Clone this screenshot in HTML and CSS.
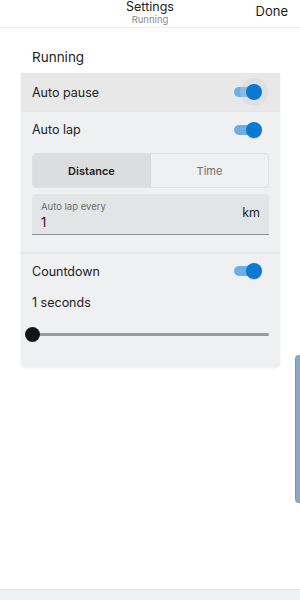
FILE: index.html
```html
<!DOCTYPE html>
<html>
<head>
<meta charset="utf-8">
<link rel="stylesheet" href="styles.css">
</head>
<body>
<div class="page">
  <header class="topbar">
    <div class="titles">
      <div class="title">Settings</div>
      <div class="subtitle">Running</div>
    </div>
    <div class="done">Done</div>
  </header>
  <main class="content">
    <h2 class="section-title">Running</h2>
    <div class="card">
      <div class="row row-active">
        <span class="label">Auto pause</span>
        <span class="toggle focused"><span class="track"></span><span class="knob"></span></span>
      </div>
      <div class="group">
        <div class="row row-plain">
          <span class="label">Auto lap</span>
          <span class="toggle"><span class="track"></span><span class="knob"></span></span>
        </div>
        <div class="segmented">
          <div class="seg seg-on">Distance</div>
          <div class="seg">Time</div>
        </div>
        <div class="field">
          <div class="field-main">
            <div class="field-label">Auto lap every</div>
            <div class="field-value">1</div>
          </div>
          <div class="field-unit">km</div>
        </div>
      </div>
      <div class="group group-last">
        <div class="row row-plain row-count">
          <span class="label">Countdown</span>
          <span class="toggle"><span class="track"></span><span class="knob"></span></span>
        </div>
        <div class="seconds">1 seconds</div>
        <div class="slider"><span class="slider-knob"></span></div>
      </div>
    </div>
  </main>
  <div class="bottom-band"></div>
  <div class="scrollbar"></div>
</div>
</body>
</html>
```
FILE: styles.css
```css
* { box-sizing: border-box; }
html, body { margin: 0; padding: 0; background: #ffffff; }
body {
  font-family: Inter, "Noto Sans", "Liberation Sans", sans-serif;
  color: #1d1d1f;
}
.page {
  position: relative;
  width: 300px;
  height: 600px;
  display: flex;
  flex-direction: column;
  overflow: hidden;
}
.topbar {
  height: 28px;
  border-bottom: 1px solid #ececec;
  display: flex;
  align-items: flex-start;
  justify-content: center;
  position: relative;
  flex-shrink: 0;
}
.titles {
  display: flex;
  flex-direction: column;
  align-items: center;
}
.title { font-size: 12.5px; line-height: 14px; color: #1a1a1a; }
.subtitle { font-size: 9.5px; line-height: 11px; color: #8a8a8a; }
.done {
  position: absolute;
  right: 12px;
  top: 4px;
  font-size: 13px;
  line-height: 14px;
  color: #1a1a1a;
}
.content {
  padding: 21px 20px 0 21px;
}
.section-title {
  margin: 0 0 0 11px;
  font-weight: 400;
  font-size: 13.5px;
  line-height: 17px;
  color: #1d1d1f;
  height: 24px;
}
.card {
  background: #eff0f2;
  border-radius: 0 0 5px 5px;
  box-shadow: 0 1px 3px rgba(0,0,0,0.08);
  display: flex;
  flex-direction: column;
}
.row {
  display: flex;
  align-items: center;
  justify-content: space-between;
  padding: 0 18px 0 11px;
}
.row-active {
  height: 39px;
  background: #e8e8e9;
  border-bottom: 1px solid #e4e5e7;
}
.row-plain { height: 35px; }
.label { font-size: 12.5px; color: #222; }
.toggle {
  position: relative;
  width: 28px;
  height: 18px;
  display: inline-block;
}
.track {
  position: absolute;
  left: 0;
  top: 4px;
  width: 24px;
  height: 10px;
  border-radius: 5px;
  background: #6bb0e0;
}
.knob {
  position: absolute;
  right: 0;
  top: 1px;
  width: 16px;
  height: 16px;
  border-radius: 50%;
  background: #0b78d1;
  box-shadow: 0 1px 1px rgba(0,0,0,0.15);
}
.focused .knob { box-shadow: 0 0 0 6px rgba(200,210,220,0.35); }
.group {
  padding: 0 0 17px 0;
  border-bottom: 2px solid #e6e7e9;
}
.group-last { border-bottom: none; padding-bottom: 0; height: 113px; }
.segmented {
  margin: 6px 11px 0 11px;
  height: 35px;
  display: flex;
  border: 1px solid #dfe0e2;
  border-radius: 4px;
  overflow: hidden;
}
.seg {
  flex: 1;
  display: flex;
  align-items: center;
  justify-content: center;
  font-size: 11px;
  color: #6e6e6e;
  background: #eff0f2;
}
.seg-on {
  background: #dcdddf;
  color: #1d1d1f;
  font-weight: 600;
  border-right: 1px solid #d6d7d9;
}
.field {
  margin: 6px 11px 0 11px;
  height: 41px;
  background: #e3e4e6;
  border-radius: 4px 4px 0 0;
  border-bottom: 1px solid #8f8f8f;
  display: flex;
  align-items: center;
  justify-content: space-between;
  padding: 0 9px 0 9px;
}
.field-main { display: flex; flex-direction: column; padding-top: 3px; }
.field-label { font-size: 9.5px; color: #6c6c6c; line-height: 12px; }
.field-value { font-size: 13px; color: #1d1d1f; line-height: 18px; }
.field-unit { font-size: 12.5px; color: #1d1d1f; padding-bottom: 3px; }
.row-count { height: 34px; }
.seconds {
  padding: 0 11px;
  font-size: 12.5px;
  color: #222;
  height: 30px;
  line-height: 30px;
}
.slider {
  position: relative;
  margin: 15px 11px 0 11px;
  height: 3px;
  background: #9a9a9c;
  border-radius: 2px;
}
.slider-knob {
  position: absolute;
  left: -7px;
  top: -6px;
  width: 15px;
  height: 15px;
  border-radius: 50%;
  background: #121416;
}
.bottom-band {
  margin-top: auto;
  height: 11px;
  background: #eff0f2;
  border-top: 1px solid #e6e6e6;
}
.scrollbar {
  position: absolute;
  right: -2px;
  top: 355px;
  width: 7px;
  height: 148px;
  border-radius: 4px;
  background: #8aa9c4;
  border: 1px solid #7d9ab3;
}
```
